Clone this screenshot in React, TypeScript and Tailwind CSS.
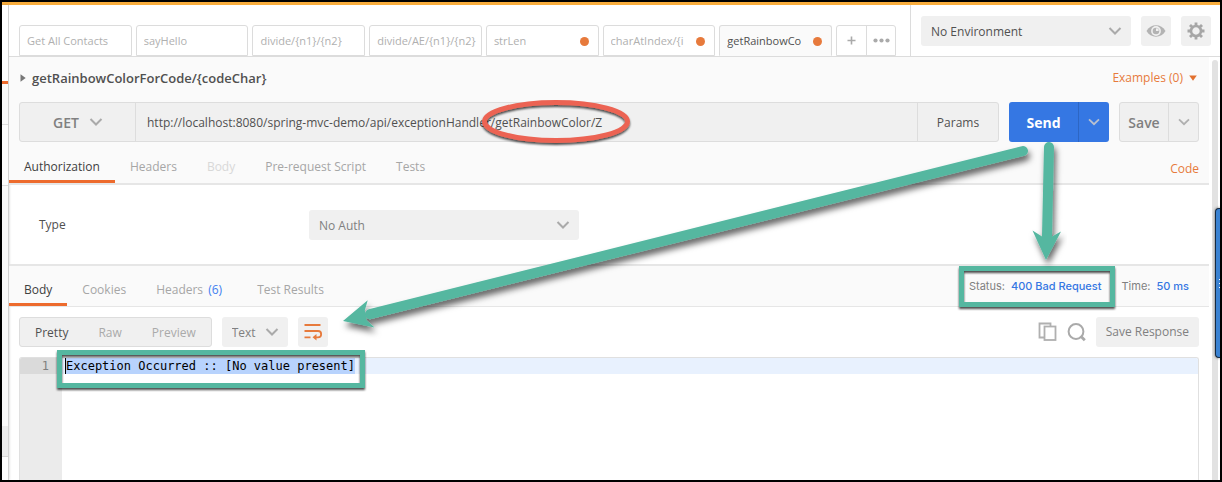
import type { ReactNode } from "react";

function Chevron({ className = "" }: { className?: string }) {
  return (
    <svg viewBox="0 0 14 10" aria-hidden="true" className={`h-[10px] w-[14px] shrink-0 ${className}`}>
      <path d="M1.5 2 L7 7.5 L12.5 2" fill="none" stroke="currentColor" strokeWidth="2" />
    </svg>
  );
}

function Dropdown({ label, className, children }: { label: string; className: string; children: ReactNode }) {
  return (
    <div className={`grid items-center rounded-[3px] bg-[#f0f0f0] ${className}`}>
      <select aria-label={label} className="col-start-1 row-start-1 h-full w-full appearance-none bg-transparent px-[10px] pt-[2px] outline-none">
        {children}
      </select>
      <Chevron className="pointer-events-none col-start-1 row-start-1 mr-[9px] justify-self-end text-[#aaaaaa]" />
    </div>
  );
}

const requestTabs = [
  { name: "Get All Contacts" },
  { name: "sayHello" },
  { name: "divide/{n1}/{n2}" },
  { name: "divide/AE/{n1}/{n2}" },
  { name: "strLen", dirty: true },
  { name: "charAtIndex/{i", dirty: true },
  { name: "getRainbowCo", dirty: true, active: true },
];

function Tab({ active, faded, children }: { active?: boolean; faded?: boolean; children: ReactNode }) {
  const tone = active ? "border-[#ed6b2d] text-[#404040]" : faded ? "border-transparent text-[#d8d8d8]" : "border-transparent text-[#a6a6a6]";
  return <button className={`h-full border-b-3 px-[15px] pt-[11px] ${tone}`}>{children}</button>;
}

function LeftStrip() {
  return (
    <div className="flex w-[7px] shrink-0 flex-col border-r border-[#d2d2d2] bg-[#fdfdfd] shadow-[0_0_3px_rgba(0,0,0,0.2)]">
      <div className="h-[76px] bg-white" />
      <div className="h-[3px] bg-[#ed6b2d]" />
      <div className="h-[41px] border-b border-[#dddddd] bg-[#fafafa]" />
      <div className="h-[61px] border-b border-[#dddddd]" />
      <div className="h-[240px] bg-[#fafafa]" />
      <div className="h-[31px] border-b border-[#d5d5d5] bg-[#ebebeb]" />
    </div>
  );
}

function TopBar() {
  return (
    <div className="flex h-[52px] border-b border-[#dcdcdc] bg-white">
      <div className="flex min-w-0 flex-1 items-end pr-[14px] pl-[10px]">
        <div className="flex min-w-0 flex-1 gap-[4px]">
          {requestTabs.map((t) => (
            <button
              key={t.name}
              className={`flex h-[31px] min-w-0 flex-1 items-center justify-between rounded-t-[3px] border border-[#dcdcdc] pt-[1px] pl-[7px] text-[11px] ${
                t.active ? "border-b-[#fafafa] bg-[#fafafa] text-[#505050]" : "bg-white text-[#b0b0b0]"
              }`}
            >
              <span className="overflow-hidden whitespace-nowrap">{t.name}</span>
              {t.dirty && <span className="mr-[9px] size-[9px] shrink-0 rounded-full bg-[#e77a3c]" />}
            </button>
          ))}
        </div>
        <div className="ml-[4px] flex h-[31px] rounded-t-[3px] border border-[#dcdcdc] text-[#aaaaaa]">
          <button aria-label="New tab" className="grid w-[30px] place-items-center border-r border-[#dcdcdc]">
            <svg viewBox="0 0 9 9" className="size-[9px]"><path d="M4.5 0.5V8.5M0.5 4.5H8.5" stroke="currentColor" strokeWidth="1.6" /></svg>
          </button>
          <button aria-label="Tab options" className="grid w-[28px] place-items-center">
            <svg viewBox="0 0 17 5" className="h-[5px] w-[17px]" fill="currentColor"><circle cx="2.5" cy="2.5" r="2.1" /><circle cx="8.5" cy="2.5" r="2.1" /><circle cx="14.5" cy="2.5" r="2.1" /></svg>
          </button>
        </div>
      </div>
      <div className="flex shrink-0 items-start gap-[10px] border-l border-[#dcdcdc] pt-[11px] pr-[9px] pl-[10px]">
        <Dropdown label="Environment" className="h-[30px] w-[210px] text-[12px] text-[#505050]">
          <option>No Environment</option>
        </Dropdown>
        <button aria-label="Environment quick look" className="grid size-[30px] place-items-center rounded-[3px] bg-[#f0f0f0]">
          <svg viewBox="0 0 20 14" className="h-[14px] w-[20px]">
            <path d="M0.5 7C4.5 -0.6 15.5 -0.6 19.5 7C15.5 14.6 4.5 14.6 0.5 7Z" fill="#b3b3b3" />
            <circle cx="10" cy="7" r="4.9" fill="#f0f0f0" />
            <circle cx="10" cy="7" r="3.3" fill="#b3b3b3" />
            <path d="M10 7V4.4H12.6V7Z" fill="#f0f0f0" />
          </svg>
        </button>
        <button aria-label="Settings" className="grid size-[30px] place-items-center rounded-[3px] bg-[#f0f0f0]">
          <svg viewBox="-9 -9 18 18" className="size-[18px]" stroke="#a6a6a6" fill="none">
            <circle r="5" strokeWidth="2.6" />
            <g strokeWidth="2.8">
              <path d="M0 -5.5V-8.5M0 5.5V8.5M-5.5 0H-8.5M5.5 0H8.5" />
              <path d="M0 -5.5V-8.5M0 5.5V8.5M-5.5 0H-8.5M5.5 0H8.5" transform="rotate(45)" />
            </g>
          </svg>
        </button>
      </div>
    </div>
  );
}

function Request() {
  return (
    <section className="border-b-2 border-[#e6e6e6] bg-[#fafafa]">
      <div className="flex h-[45px] items-center justify-between pr-[12px] pb-[4px] pl-[11px]">
        <h1 className="flex items-center gap-[6px] text-[13px] leading-[18px] font-semibold text-[#505050]">
          <svg viewBox="0 0 6 8" className="h-[8px] w-[6px]"><path d="M0.5 0.3L5.7 4L0.5 7.7Z" fill="#777" /></svg>
          getRainbowColorForCode/{"{codeChar}"}
        </h1>
        <button className="flex items-center gap-[6px] text-[12px] text-[#e77a3c]">
          Examples (0)
          <svg viewBox="0 0 8 6" className="h-[6px] w-[8px]"><path d="M0.2 0.5H7.8L4 5.7Z" fill="#e2702f" /></svg>
        </button>
      </div>
      <div className="flex h-[40px] gap-[10px] px-[10px]">
        <div className="flex min-w-0 flex-1 rounded-[3px] border border-[#dddddd] bg-[#f0f0f0]">
          <div className="grid w-[116px] items-center border-r border-[#dddddd]">
            <select aria-label="Method" className="col-start-1 row-start-1 h-full w-full appearance-none bg-transparent pl-[33px] text-[14px] font-semibold text-[#808080] outline-none">
              <option>GET</option>
            </select>
            <Chevron className="pointer-events-none col-start-1 row-start-1 mr-[32px] justify-self-end text-[#aaaaaa]" />
          </div>
          <input
            aria-label="Request URL"
            defaultValue="http://localhost:8080/spring-mvc-demo/api/exceptionHandler/getRainbowColor/Z"
            className="min-w-0 flex-1 bg-transparent px-[11px] pt-[2px] text-[12px] text-[#505050] outline-none"
          />
          <button className="w-[81px] border-l border-[#dddddd] pt-[2px] text-[12px] text-[#505050]">Params</button>
        </div>
        <div className="flex w-[100px] overflow-hidden rounded-[3px] bg-[#3577e3] text-white">
          <button className="flex-1 text-[14px] font-bold">Send</button>
          <button aria-label="Send options" className="grid w-[31px] place-items-center border-l border-[#2d66c4] text-[#b8c0d0]"><Chevron className="scale-90" /></button>
        </div>
        <div className="flex w-[80px] rounded-[3px] border border-[#dddddd] bg-[#f0f0f0] text-[#808080]">
          <button className="flex-1 text-[14px] font-semibold">Save</button>
          <button aria-label="Save options" className="grid w-[30px] place-items-center border-l border-[#dddddd] text-[#b0b0b0]"><Chevron className="scale-90" /></button>
        </div>
      </div>
      <div className="flex h-[41px] items-center pr-[10px] text-[12px]">
        <Tab active>Authorization</Tab>
        <Tab>Headers</Tab>
        <Tab faded>Body</Tab>
        <Tab>Pre-request Script</Tab>
        <Tab>Tests</Tab>
        <a href="#code" className="ml-auto pt-[12px] text-[#e77a3c]">Code</a>
      </div>
    </section>
  );
}

function Response() {
  return (
    <section className="flex flex-1 flex-col">
      <div className="flex h-[43px] items-center border-t-2 border-b border-[#e6e6e6] bg-[#fafafa] text-[12px]">
        <Tab active>Body</Tab>
        <Tab>Cookies</Tab>
        <Tab>Headers <span className="mr-[5px] ml-[2px] text-[#3f7ff0]">(6)</span></Tab>
        <Tab>Test Results</Tab>
        <dl className="ml-auto flex gap-[20px] pr-[20px] font-['Inter',sans-serif] text-[11px] text-[#808080]">
          <div className="flex gap-[6px]"><dt>Status:</dt><dd className="font-medium text-[#3577e3]">400 Bad Request</dd></div>
          <div className="flex gap-[6px]"><dt>Time:</dt><dd className="font-medium text-[#3577e3]">50 ms</dd></div>
        </dl>
      </div>
      <div className="flex items-center gap-[10px] p-[10px] text-[12px]">
        <div className="flex h-[30px] rounded-[3px] border border-[#dddddd] bg-[#f0f0f0] text-[#aaaaaa]">
          <button className="px-[15px] pt-[2px] text-[#505050]">Pretty</button>
          <button className="px-[15px] pt-[2px]">Raw</button>
          <button className="px-[15px] pt-[2px]">Preview</button>
        </div>
        <Dropdown label="Format" className="h-[30px] w-[66px] text-[#808080]">
          <option>Text</option>
        </Dropdown>
        <button aria-label="Wrap lines" className="grid size-[30px] place-items-center rounded-[3px] bg-[#f0f0f0]">
          <svg viewBox="0 0 18 16" className="h-[16px] w-[18px] overflow-visible" fill="none" stroke="#e77a3c" strokeWidth="1.8">
            <path d="M0.5 1H16.5M0.5 7H14A3 3 0 0 1 14 13.3H11M0.5 13.3H6.5" />
            <path d="M12.5 10.1L8.5 13.3L12.5 16.5Z" fill="#e77a3c" stroke="none" />
          </svg>
        </button>
        <div className="ml-auto flex items-center gap-[10px]">
          <button aria-label="Copy response">
            <svg viewBox="0 0 19 20" className="h-[20px] w-[19px]" fill="none" stroke="#b0b0b0" strokeWidth="1.8">
              <path d="M6 15.5H1.5V1.5H12.5V4.5" /><rect x="6.500" y="4.500" width="11" height="13.500" />
            </svg>
          </button>
          <button aria-label="Search response">
            <svg viewBox="0 0 19 19" className="size-[19px]" fill="none" stroke="#aaaaaa">
              <circle cx="9" cy="8.5" r="7.4" strokeWidth="2" /><path d="M13.6 13.1L17.8 17.3" strokeWidth="2.8" />
            </svg>
          </button>
          <button className="h-[30px] rounded-[3px] bg-[#f0f0f0] px-[10px] text-[#808080]">Save Response</button>
        </div>
      </div>
      <div className="mx-[10px] flex flex-1 overflow-hidden rounded-t-[3px] border border-b-0 border-[#e0e0e0] font-['DejaVu_Sans_Mono',monospace] text-[12px] leading-[16px]">
        <div className="w-[42px] shrink-0 bg-[#ebebeb] text-right text-[#808080]"><div className="bg-[#dadada] pr-[13px]">1</div></div>
        <div className="flex-1 text-black">
          <div className="flex bg-[#e8f1fe] pl-[3px]"><code className="border-l border-black bg-[#b8d3fd] font-[inherit]">Exception Occurred :: [No value present]</code></div>
        </div>
      </div>
    </section>
  );
}

function Annotations() {
  return (
    <svg aria-hidden="true" className="pointer-events-none absolute -top-[2px] -left-[2px] h-[480px] w-[1220px]" viewBox="0 0 1220 480">
      <defs>
        <filter id="soft" x="-20%" y="-20%" width="140%" height="150%">
          <feDropShadow dx="2" dy="5" stdDeviation="3" floodColor="#000" floodOpacity="0.6" />
        </filter>
        <filter id="tight" x="-20%" y="-30%" width="140%" height="170%">
          <feDropShadow dx="0" dy="2" stdDeviation="1" floodColor="#000" floodOpacity="0.7" />
        </filter>
      </defs>
      <g fill="none" strokeWidth="5" filter="url(#tight)">
        <ellipse cx="556" cy="121.5" rx="71.5" ry="19" stroke="#ec6453" />
        <rect x="961.5" y="268.5" width="151" height="36" stroke="#54b7a0" />
        <rect x="59.5" y="352.5" width="303" height="33" stroke="#54b7a0" />
      </g>
      <g stroke="#54b7a0" strokeWidth="10" strokeLinecap="round" filter="url(#soft)">
        <path d="M1023 151L370 314.2" />
        <path d="M343 321L367.7 300.3L364.8 310.5L366.6 320.2L374.5 327.5Z" fill="#54b7a0" stroke="none" />
      </g>
      <g stroke="#54b7a0" strokeWidth="10" strokeLinecap="round" filter="url(#soft)">
        <path d="M1049 147L1047 236" />
        <path d="M1046 260L1032.5 230.5L1042 236.5L1052 236.5L1061 231.5Z" fill="#54b7a0" stroke="none" />
      </g>
    </svg>
  );
}

export default function App() {
  return (
    <div className="relative flex min-h-screen flex-col overflow-hidden border-2 border-black bg-white font-['Open_Sans',sans-serif]">
      <div className="h-[3px] bg-[#f9ad3d]" />
      <div className="flex flex-1">
        <LeftStrip />
        <main className="flex min-w-0 flex-1 flex-col">
          <TopBar />
          <div className="flex flex-1">
            <div className="flex min-w-0 flex-1 flex-col">
              <Request />
              <section className="flex h-[79px] items-center pl-[30px] text-[12px]">
                <span className="w-[270px] text-[#505050]">Type</span>
                <Dropdown label="Type" className="h-[30px] w-[270px] text-[#808080]">
                  <option>No Auth</option>
                </Dropdown>
              </section>
              <Response />
            </div>
            <div className="flex w-[11px] flex-col pt-[3px] pr-[2px] pl-[3px]">
              <div className="flex-1 rounded-t-full bg-[#e2e2e2]" />
            </div>
          </div>
        </main>
      </div>
      <div className="absolute top-[206px] right-0 flex h-[150px] w-[5px] flex-col items-end justify-center gap-[3px] rounded-l-[4px] border border-r-0 border-[#152a40] bg-[#3a82d2] shadow-[0_0_3px_rgba(0,0,0,0.6)]">
        <span className="size-[1px] bg-white" />
        <span className="size-[1px] bg-white" />
        <span className="size-[1px] bg-white" />
      </div>
      <Annotations />
    </div>
  );
}
